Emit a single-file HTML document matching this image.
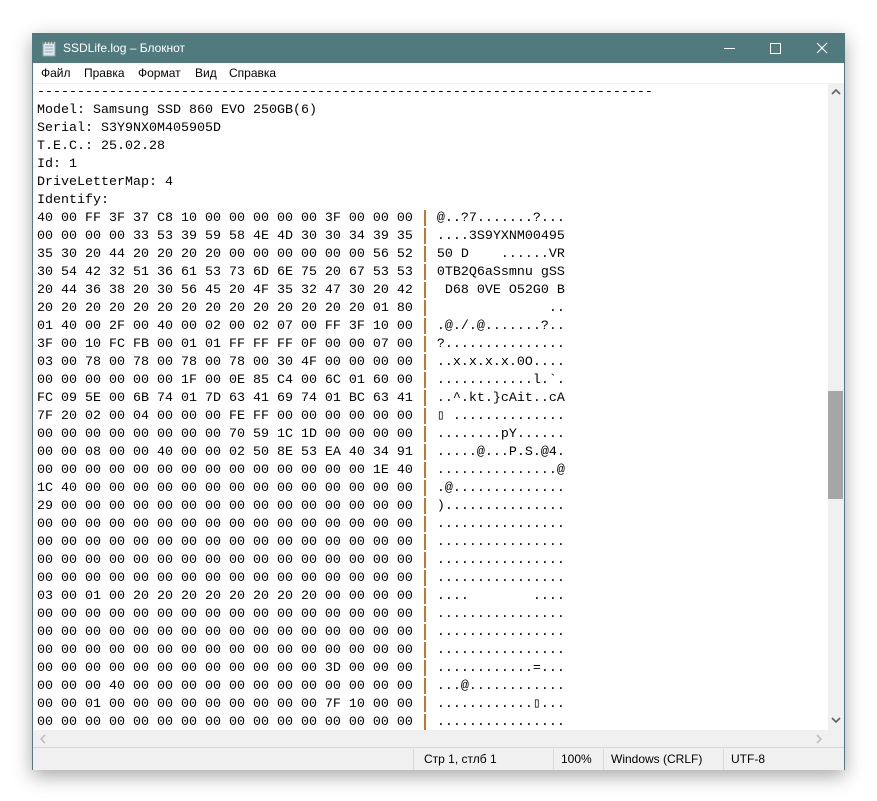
<!DOCTYPE html>
<html><head><meta charset="utf-8"><style>
body{margin:0;width:877px;height:801px;background:#fff;position:relative;overflow:hidden;font-family:"Liberation Sans",sans-serif}
#win{position:absolute;left:32px;top:33px;width:811px;height:735px;border:1px solid #4f7b80;background:#f0f0f0;box-shadow:0 6px 18px rgba(0,0,0,.35)}
#title{position:absolute;left:0;top:0;width:811px;height:29px;background:#507a7e;color:#fff;font-size:12px}
#menu{position:absolute;left:0;top:29px;width:811px;height:20px;background:#fff;font-size:12px;color:#000}
#menu span{position:absolute;top:3px}
#edit{position:absolute;left:0;top:50px;width:795px;height:646px;background:#fff;overflow:hidden}
pre{margin:0;position:absolute;left:4px;top:0;font-family:"Liberation Mono",monospace;font-size:13.33px;line-height:18px;color:#000}
#vs{position:absolute;left:795px;top:50px;width:16px;height:646px;background:#f0f0f0}
#hs{position:absolute;left:0;top:696px;width:795px;height:17px;background:#f0f0f0}
#status{position:absolute;left:0;top:713px;width:811px;height:22px;background:#f0f0f0;border-top:1px solid #d7d7d7;font-size:12px}
#status span{position:absolute;top:4px}
.dv{position:absolute;top:1px;width:1px;height:21px;background:#d9d9d9}
</style></head><body>
<div id="win">
<div id="title">
<svg style="position:absolute;left:8px;top:6px" width="16" height="17" viewBox="0 0 16 17"><rect x="2" y="2" width="12" height="14" fill="#dfe6ee" stroke="#8aa" /><path d="M4 6h8M4 9h8M4 12h8" stroke="#9ab" /><path d="M3 1v3M6 1v3M9 1v3M12 1v3" stroke="#555"/></svg>
<span style="position:absolute;left:30px;top:7px">SSDLife.log – Блокнот</span>
<div style="position:absolute;left:691px;top:14px;width:11px;height:1px;background:#fff"></div>
<div style="position:absolute;left:737px;top:9px;width:9px;height:9px;border:1px solid #fff"></div>
<svg style="position:absolute;left:783px;top:8px" width="12" height="12"><path d="M1 1L11 11M11 1L1 11" stroke="#fff" stroke-width="1.2"/></svg>
</div>
<div id="menu"><span style="left:8px">Файл</span><span style="left:51px">Правка</span><span style="left:105px">Формат</span><span style="left:162px">Вид</span><span style="left:196px">Справка</span></div>
<div id="edit"><pre>-----------------------------------------------------------------------------
Model: Samsung SSD 860 EVO 250GB(6)
Serial: S3Y9NX0M405905D
T.E.C.: 25.02.28
Id: 1
DriveLetterMap: 4
Identify:
40 00 FF 3F 37 C8 10 00 00 00 00 00 3F 00 00 00   @..?7.......?...
00 00 00 00 33 53 39 59 58 4E 4D 30 30 34 39 35   ....3S9YXNM00495
35 30 20 44 20 20 20 20 00 00 00 00 00 00 56 52   50 D    ......VR
30 54 42 32 51 36 61 53 73 6D 6E 75 20 67 53 53   0TB2Q6aSsmnu gSS
20 44 36 38 20 30 56 45 20 4F 35 32 47 30 20 42    D68 0VE O52G0 B
20 20 20 20 20 20 20 20 20 20 20 20 20 20 01 80                 ..
01 40 00 2F 00 40 00 02 00 02 07 00 FF 3F 10 00   .@./.@.......?..
3F 00 10 FC FB 00 01 01 FF FF FF 0F 00 00 07 00   ?...............
03 00 78 00 78 00 78 00 78 00 30 4F 00 00 00 00   ..x.x.x.x.0O....
00 00 00 00 00 00 1F 00 0E 85 C4 00 6C 01 60 00   ............l.`.
FC 09 5E 00 6B 74 01 7D 63 41 69 74 01 BC 63 41   ..^.kt.}cAit..cA
7F 20 02 00 04 00 00 00 FE FF 00 00 00 00 00 00   ▯ ..............
00 00 00 00 00 00 00 00 70 59 1C 1D 00 00 00 00   ........pY......
00 00 08 00 00 40 00 00 02 50 8E 53 EA 40 34 91   .....@...P.S.@4.
00 00 00 00 00 00 00 00 00 00 00 00 00 00 1E 40   ...............@
1C 40 00 00 00 00 00 00 00 00 00 00 00 00 00 00   .@..............
29 00 00 00 00 00 00 00 00 00 00 00 00 00 00 00   )...............
00 00 00 00 00 00 00 00 00 00 00 00 00 00 00 00   ................
00 00 00 00 00 00 00 00 00 00 00 00 00 00 00 00   ................
00 00 00 00 00 00 00 00 00 00 00 00 00 00 00 00   ................
00 00 00 00 00 00 00 00 00 00 00 00 00 00 00 00   ................
03 00 01 00 20 20 20 20 20 20 20 20 00 00 00 00   ....        ....
00 00 00 00 00 00 00 00 00 00 00 00 00 00 00 00   ................
00 00 00 00 00 00 00 00 00 00 00 00 00 00 00 00   ................
00 00 00 00 00 00 00 00 00 00 00 00 00 00 00 00   ................
00 00 00 00 00 00 00 00 00 00 00 00 3D 00 00 00   ............=...
00 00 00 40 00 00 00 00 00 00 00 00 00 00 00 00   ...@............
00 00 01 00 00 00 00 00 00 00 00 00 7F 10 00 00   ............▯...
00 00 00 00 00 00 00 00 00 00 00 00 00 00 00 00   ................</pre>
<div style="position:absolute;left:391px;top:126px;width:2px;height:530px;background:repeating-linear-gradient(#c07a2a 0 16px,transparent 16px 18px)"></div>
</div>
<div id="vs">
<svg style="position:absolute;left:3px;top:4px" width="10" height="7"><path d="M1 6L5 2L9 6" stroke="#606060" stroke-width="1.6" fill="none"/></svg>
<div style="position:absolute;left:0;top:307px;width:15px;height:108px;background:#a6a6a6"></div>
<svg style="position:absolute;left:3px;top:633px" width="10" height="7"><path d="M1 1L5 5L9 1" stroke="#606060" stroke-width="1.6" fill="none"/></svg>
</div>
<div id="hs">
<svg style="position:absolute;left:6px;top:4px" width="7" height="10"><path d="M6 1L2 5L6 9" stroke="#c0c0c0" stroke-width="1.6" fill="none"/></svg>
<svg style="position:absolute;left:783px;top:4px" width="7" height="10"><path d="M1 1L5 5L1 9" stroke="#c0c0c0" stroke-width="1.6" fill="none"/></svg>
</div>
<div id="status">
<div class="dv" style="left:380px"></div><div class="dv" style="left:520px"></div><div class="dv" style="left:570px"></div><div class="dv" style="left:690px"></div>
<span style="left:391px">Стр 1, стлб 1</span><span style="left:528px">100%</span><span style="left:578px">Windows (CRLF)</span><span style="left:698px">UTF-8</span>
</div>
</div>
</body></html>
